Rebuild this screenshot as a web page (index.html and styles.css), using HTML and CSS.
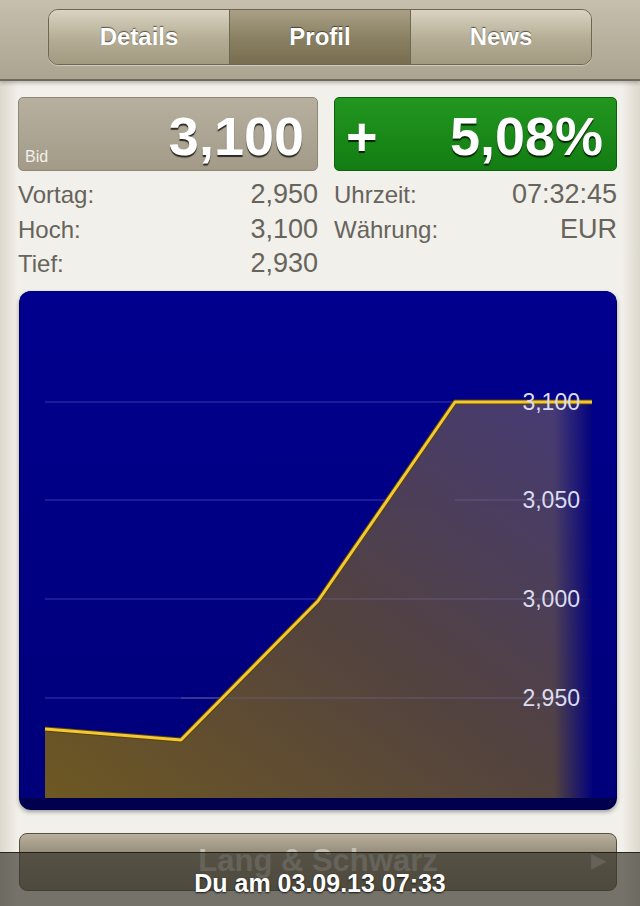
FILE: index.html
```html
<!DOCTYPE html>
<html lang="de">
<head>
    <meta charset="UTF-8">
    <meta name="viewport" content="width=device-width, initial-scale=1.0">
    <title>Kurs</title>
    <link rel="stylesheet" href="styles.css">
</head>
<body>
    <div class="topbar">
        <div class="segments">
            <div class="segment">Details</div>
            <div class="segment active">Profil</div>
            <div class="segment">News</div>
        </div>
    </div>

    <div class="content">
        <div class="quote-row">
            <div class="bid-box">
                <span class="bid-label">Bid</span>
                <span class="big-value">3,100</span>
            </div>
            <div class="change-box">
                <span class="big-value">+</span>
                <span class="big-value">5,08%</span>
            </div>
        </div>

        <div class="info-row">
            <div class="info-col">
                <div class="info-line"><span>Vortag:</span><span class="num">2,950</span></div>
                <div class="info-line"><span>Hoch:</span><span class="num">3,100</span></div>
                <div class="info-line"><span>Tief:</span><span class="num">2,930</span></div>
            </div>
            <div class="info-col">
                <div class="info-line"><span>Uhrzeit:</span><span class="num">07:32:45</span></div>
                <div class="info-line"><span>Währung:</span><span class="num">EUR</span></div>
            </div>
        </div>

        <div class="chart">
            <svg width="598" height="519" viewBox="0 0 598 519">
                <defs>
                    <linearGradient id="bg" x1="0" y1="0" x2="0" y2="1">
                        <stop offset="0" stop-color="#00008e"/>
                        <stop offset="1" stop-color="#00007a"/>
                    </linearGradient>
                    <linearGradient id="area" x1="0" y1="1" x2="1" y2="0">
                        <stop offset="0" stop-color="#6e5822"/>
                        <stop offset="0.5" stop-color="#524240"/>
                        <stop offset="1" stop-color="#453a78"/>
                    </linearGradient>
                    <linearGradient id="fade" x1="0" y1="0" x2="1" y2="0">
                        <stop offset="0" stop-color="#00007e" stop-opacity="0"/>
                        <stop offset="1" stop-color="#00007e" stop-opacity="0.95"/>
                    </linearGradient>
                </defs>
                <rect x="0" y="0" width="598" height="519" fill="#00004e"/>
                <rect x="1" y="0" width="596" height="507" fill="url(#bg)"/>

                <g stroke="#2626a2" stroke-width="1.5">
                    <line x1="26" y1="111" x2="573" y2="111"/>
                    <line x1="26" y1="209" x2="573" y2="209"/>
                    <line x1="26" y1="308" x2="573" y2="308"/>
                    <line x1="26" y1="407" x2="573" y2="407"/>
                </g>

                <polygon points="26,438 162,449 299,310 436,111 573,111 573,507 26,507" fill="url(#area)"/>
                <g stroke="#6a5f8a" stroke-width="1.5" opacity="0.5">
                    <line x1="436" y1="209" x2="573" y2="209"/>
                    <line x1="299" y1="308" x2="573" y2="308"/>
                    <line x1="162" y1="407" x2="573" y2="407"/>
                </g>
                <rect x="535" y="111" width="38" height="396" fill="url(#fade)"/>

                <polyline points="26,438 162,449 299,310 436,111 573,111" fill="none" stroke="#5a4400" stroke-width="5" stroke-linejoin="round"/>
                <polyline points="26,438 162,449 299,310 436,111 573,111" fill="none" stroke="#f2c83a" stroke-width="3" stroke-linejoin="round"/>

                <g class="axis-label" text-anchor="end">
                    <text x="561" y="119">3,100</text>
                    <text x="561" y="217">3,050</text>
                    <text x="561" y="316">3,000</text>
                    <text x="561" y="415">2,950</text>
                </g>
            </svg>
        </div>

        <div class="source-button">
            <span class="source-name">Lang &amp; Schwarz</span>
            <span class="source-arrow">&#9654;</span>
        </div>
    </div>

    <div class="status-bar">Du am 03.09.13 07:33</div>
</body>
</html>
```

FILE: styles.css
```css
body {
    margin: 0;
    padding: 0;
    width: 640px;
    height: 906px;
    overflow: hidden;
    position: relative;
    font-family: "Liberation Sans", Arial, sans-serif;
    background: linear-gradient(to right, #dcd8ce 0, #f2f0ea 18px, #f2f0ea 622px, #dcd8ce 640px);
    color: #66645c;
}
.topbar {
    height: 81px;
    background: linear-gradient(#c6bfad, #aba491);
    border-bottom: 2px solid #6f6959;
    box-shadow: 0 2px 4px rgba(0, 0, 0, 0.25);
    padding-top: 9px;
    box-sizing: border-box;
}
.segments {
    width: 544px;
    height: 56px;
    margin: 0 auto;
    display: flex;
    border: 1px solid #6e6752;
    border-radius: 10px;
    overflow: hidden;
    box-sizing: border-box;
    box-shadow: 0 1px 1px rgba(255, 255, 255, 0.4);
}
.segment {
    flex: 1;
    display: flex;
    align-items: center;
    justify-content: center;
    font-weight: bold;
    font-size: 24px;
    color: #fff;
    text-shadow: 0 -1px 1px rgba(0, 0, 0, 0.55);
    background: linear-gradient(#d9d3c1, #b4ac94 55%, #a19980);
    border-left: 1px solid #6e6752;
}
.segment:first-child {
    border-left: none;
}
.segment.active {
    background: linear-gradient(#a9a086, #8b8164 50%, #786d4f);
}
.content {
    padding: 16px 23px 0 18px;
}
.quote-row,
.info-row {
    display: grid;
    grid-template-columns: 300px 283px;
    column-gap: 16px;
}
.bid-box,
.change-box {
    height: 74px;
    border-radius: 5px;
    box-sizing: border-box;
    display: flex;
    align-items: center;
    justify-content: space-between;
    padding: 4px 13px 0 6px;
}
.bid-box {
    background: linear-gradient(#b7b09f, #a39b88);
    border: 1px solid #8e8776;
    position: relative;
    justify-content: flex-end;
}
.change-box {
    background: linear-gradient(#22961f, #137d13);
    border: 1px solid #0f5f0f;
    padding-left: 11px;
}
.big-value {
    font-weight: bold;
    font-size: 54px;
    color: #fff;
    text-shadow: 0 2px 1px rgba(0, 0, 0, 0.75);
}
.bid-label {
    position: absolute;
    left: 6px;
    bottom: 4px;
    font-size: 16px;
    color: #f2f0ea;
}
.info-row {
    margin-top: 6px;
}
.info-line {
    display: flex;
    justify-content: space-between;
    align-items: baseline;
    font-size: 24px;
    line-height: 34.5px;
    height: 34.5px;
}
.info-line .num {
    font-size: 27px;
}
.chart {
    margin-top: 10px;
    width: 598px;
    height: 519px;
    margin-left: 1px;
    border-radius: 12px;
    overflow: hidden;
    box-shadow: 0 2px 4px rgba(0, 0, 0, 0.35);
}
.chart svg {
    display: block;
}
.axis-label text {
    font-family: "Liberation Sans", Arial, sans-serif;
    font-size: 23px;
    fill: #dcdcf0;
}
.source-button {
    margin-top: 23px;
    margin-left: 1px;
    width: 598px;
    height: 58px;
    box-sizing: border-box;
    border: 1px solid #55503f;
    border-radius: 8px;
    background: linear-gradient(#b9b19d, #8f8773 40%, #7a7360);
    display: flex;
    align-items: center;
    justify-content: center;
    position: relative;
}
.source-name {
    font-weight: bold;
    font-size: 31px;
    color: #c4c0b6;
    margin-top: -2px;
}
.source-arrow {
    position: absolute;
    right: 10px;
    top: 14px;
    font-size: 20px;
    color: #c0bdb6;
}
.status-bar {
    position: absolute;
    left: 0;
    right: 0;
    bottom: 0;
    height: 54px;
    background: rgba(58, 54, 46, 0.68);
    border-top: 1px solid rgba(20, 18, 14, 0.8);
    box-sizing: border-box;
    text-align: center;
    color: #fff;
    font-weight: bold;
    font-size: 25px;
    line-height: 60px;
    text-shadow: 0 1px 2px rgba(0, 0, 0, 0.8);
}
```
